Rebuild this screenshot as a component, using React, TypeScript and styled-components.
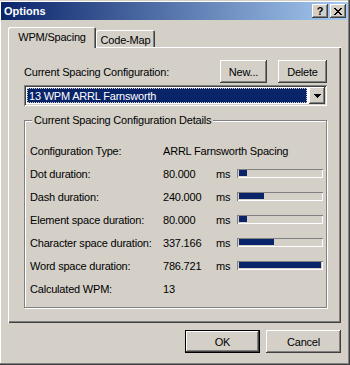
import React from 'react';
import styled, { createGlobalStyle, css } from 'styled-components';

const GlobalStyle = createGlobalStyle`
  html, body {
    margin: 0;
    padding: 0;
    background: #d4d0c8;
  }
  body {
    font-family: "Liberation Sans", Arial, sans-serif;
    font-size: 11px;
    letter-spacing: -0.2px;
    color: #000;
  }
`;

// classic 3d bevels
const raised = css`
  background: #d4d0c8;
  box-shadow: inset -1px -1px #404040, inset 1px 1px #fff, inset -2px -2px #808080, inset 2px 2px #d4d0c8;
`;

const sunken = css`
  box-shadow: inset 1px 1px #808080, inset -1px -1px #fff, inset 2px 2px #404040, inset -2px -2px #d4d0c8;
`;

const Window = styled.div`
  width: 350px;
  height: 365px;
  box-sizing: border-box;
  padding: 2px 2px 2px 1px;
  background: #d4d0c8;
  box-shadow: inset -1px -1px #404040, inset -2px -2px #808080, inset 0 1px #d4d0c8, inset 1px 2px #fff;
  display: flex;
  flex-direction: column;
`;

const TitleBar = styled.div`
  height: 18px;
  display: flex;
  align-items: center;
  padding: 0 2px 0 3px;
  background: linear-gradient(to right, #0a246a, #a6caf0);
  color: #fff;
  font-weight: bold;
  letter-spacing: 0;
`;

const TitleText = styled.span`
  flex: 1;
`;

const TitleButton = styled.div`
  ${raised};
  width: 16px;
  height: 14px;
  display: flex;
  align-items: center;
  justify-content: center;
  color: #000;
  font-size: 11px;
  font-weight: bold;
  margin-left: 2px;
  & + & {
    margin-left: 2px;
  }
`;

const Body = styled.div`
  flex: 1;
  padding: 7px 7px 0 7px;
  display: flex;
  flex-direction: column;
`;

const TabStrip = styled.div`
  display: flex;
  align-items: flex-end;
  height: 21px;
  margin-bottom: -1px;
  position: relative;
  z-index: 1;
`;

const Tab = styled.div<{ $active?: boolean; $width: number }>`
  box-sizing: border-box;
  width: ${({ $width }) => $width}px;
  display: flex;
  align-items: center;
  justify-content: center;
  background: #d4d0c8;
  border-radius: 2px 2px 0 0;
  box-shadow: inset 1px 1px #fff, inset -1px 0 #404040, inset -2px 0 #808080;
  ${({ $active }) =>
    $active
      ? css`
          height: 21px;
          padding-bottom: 1px;
        `
      : css`
          height: 17px;
          margin-bottom: 1px;
          padding-top: 2px;
        `}
`;

const Panel = styled.div`
  box-sizing: border-box;
  width: 333px;
  padding: 13px 14px 15px 16px;
  box-shadow: inset 1px 1px #fff, inset -1px -1px #404040, inset -2px -2px #808080;
  display: flex;
  flex-direction: column;
`;

const TopRow = styled.div`
  display: flex;
  align-items: center;
  height: 23px;
`;

const Label = styled.span`
  flex: 1;
`;

const Button = styled.div<{ $width: number; $default?: boolean }>`
  ${raised};
  box-sizing: border-box;
  width: ${({ $width }) => $width}px;
  height: 23px;
  display: flex;
  align-items: center;
  justify-content: center;
  ${({ $default }) =>
    $default &&
    css`
      box-shadow: inset 0 0 0 1px #000, inset -2px -2px #404040, inset 2px 2px #fff, inset -3px -3px #808080;
    `}
`;

const ButtonGroup = styled.div`
  display: flex;
  gap: 11px;
`;

const Combo = styled.div`
  ${sunken};
  background: #fff;
  height: 21px;
  box-sizing: border-box;
  margin-top: 2px;
  padding: 2px;
  display: flex;
`;

const ComboValue = styled.div`
  flex: 1;
  margin: 1px 2px 1px 1px;
  background: #0a246a;
  color: #fff;
  outline: 1px dotted #d4d0c8;
  outline-offset: -1px;
  display: flex;
  align-items: center;
  padding-left: 2px;
`;

const ComboButton = styled.div`
  ${raised};
  width: 16px;
  height: 17px;
  display: flex;
  align-items: center;
  justify-content: center;
`;

const GroupBox = styled.div`
  position: relative;
  margin-top: 14px;
  border: 1px solid #808080;
  box-shadow: inset 1px 1px #fff, 1px 1px #fff;
  padding: 18px 0 7px 5px;
`;

const Legend = styled.span`
  position: absolute;
  top: -7px;
  left: 7px;
  padding: 0 2px;
  line-height: 13px;
  background: #d4d0c8;
`;

const DetailGrid = styled.div`
  display: grid;
  grid-template-columns: 133px 53px 21px 86px;
  grid-auto-rows: 23px;
  align-items: center;
`;

const Track = styled.div`
  box-sizing: border-box;
  height: 9px;
  padding: 1px 2px 1px 2px;
  box-shadow: inset 1px 1px #808080, inset -1px -1px #fff;
  display: flex;
`;

const Fill = styled.div`
  height: 6px;
  background: #0a246a;
`;

const Footer = styled.div`
  display: flex;
  justify-content: flex-end;
  gap: 6px;
  margin-top: 7px;
  width: 333px;
`;

const QuestionGlyph = styled.span`
  font-family: "Liberation Sans", Arial, sans-serif;
  font-size: 11px;
  font-weight: bold;
  line-height: 1;
`;

interface Detail {
  label: string;
  value: string;
  ms?: number;
}

const MAX_MS = 786.721;

const details: Detail[] = [
  { label: 'Configuration Type:', value: 'ARRL Farnsworth Spacing' },
  { label: 'Dot duration:', value: '80.000', ms: 80 },
  { label: 'Dash duration:', value: '240.000', ms: 240 },
  { label: 'Element space duration:', value: '80.000', ms: 80 },
  { label: 'Character space duration:', value: '337.166', ms: 337.166 },
  { label: 'Word space duration:', value: '786.721', ms: 786.721 },
  { label: 'Calculated WPM:', value: '13' },
];

const CloseIcon = () => (
  <svg width="8" height="7" viewBox="0 0 8 7" shapeRendering="crispEdges">
    <path d="M0 0h2v1H0zM6 0h2v1H6zM1 1h2v1H1zM5 1h2v1H5zM2 2h4v1H2zM3 3h2v1H3zM2 4h4v1H2zM1 5h2v1H1zM5 5h2v1H5zM0 6h2v1H0zM6 6h2v1H6z" fill="#000" />
  </svg>
);

const ArrowDown = () => (
  <svg width="7" height="4" viewBox="0 0 7 4" shapeRendering="crispEdges">
    <path d="M0 0h7v1H0zM1 1h5v1H1zM2 2h3v1H2zM3 3h1v1H3z" fill="#000" />
  </svg>
);

const App: React.FC = () => {
  return (
    <>
      <GlobalStyle />
      <Window>
        <TitleBar>
          <TitleText>Options</TitleText>
          <TitleButton>
            <QuestionGlyph>?</QuestionGlyph>
          </TitleButton>
          <TitleButton>
            <CloseIcon />
          </TitleButton>
        </TitleBar>

        <Body>
          <TabStrip>
            <Tab $active $width={88}>WPM/Spacing</Tab>
            <Tab $width={59}>Code-Map</Tab>
          </TabStrip>

          <Panel>
            <TopRow>
              <Label>Current Spacing Configuration:</Label>
              <ButtonGroup>
                <Button $width={47}>New...</Button>
                <Button $width={49}>Delete</Button>
              </ButtonGroup>
            </TopRow>

            <Combo>
              <ComboValue>13 WPM ARRL Farnsworth</ComboValue>
              <ComboButton>
                <ArrowDown />
              </ComboButton>
            </Combo>

            <GroupBox>
              <Legend>Current Spacing Configuration Details</Legend>
              <DetailGrid>
                {details.map((d) => (
                  <React.Fragment key={d.label}>
                    <span>{d.label}</span>
                    {d.ms === undefined ? (
                      <span style={{ gridColumn: 'span 3' }}>{d.value}</span>
                    ) : (
                      <>
                        <span>{d.value}</span>
                        <span>ms</span>
                        <Track>
                          <Fill style={{ width: `${(d.ms / MAX_MS) * 100}%` }} />
                        </Track>
                      </>
                    )}
                  </React.Fragment>
                ))}
              </DetailGrid>
            </GroupBox>
          </Panel>

          <Footer>
            <Button $width={75} $default>OK</Button>
            <Button $width={75}>Cancel</Button>
          </Footer>
        </Body>
      </Window>
    </>
  );
};

export default App;
